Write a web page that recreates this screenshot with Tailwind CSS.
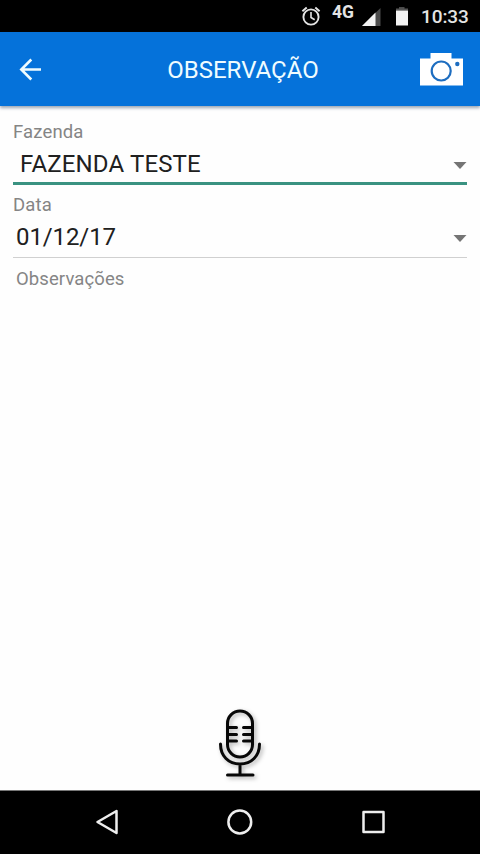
<!DOCTYPE html>
<html lang="pt-BR">
<head>
<meta charset="utf-8">
<title>Observação</title>
<script src="https://cdn.jsdelivr.net/npm/@tailwindcss/browser@4"></script>
</head>
<body class="flex h-[854px] w-[480px] flex-col overflow-hidden bg-[#fefefe] font-['Roboto',sans-serif]">
  <div class="flex h-8 shrink-0 items-center bg-black pl-[300px] text-[#e4e4e4]">
    <svg class="h-8 w-[22px] shrink-0" viewBox="300 0 22 32" fill="none" stroke="#e4e4e4" stroke-width="1.9">
      <circle cx="311" cy="17" r="7.6"/>
      <path d="M311 12v5.5l3.7 2.2" stroke-width="1.6"/>
      <path d="M302.4 11.2l4.3-3.7M319.6 11.2l-4.3-3.7"/>
    </svg>
    <span class="ml-[10px] w-[26px] shrink-0 pb-[8px] text-[17.500px] leading-6 font-bold">4G</span>
    <svg class="ml-[3px] h-8 w-[50px] shrink-0" viewBox="361 0 50 32">
      <path d="M380.500 8v18h-18.500z" fill="#4a4a4a"/>
      <path d="M375.500 12.500v13.500h-13.500z" fill="#f2f2f2"/>
      <path d="M399 7h5.500v2h-5.500z" fill="#4a4a4a"/>
      <path d="M396 8.500h12v2h-12z" fill="#555"/>
      <path d="M396 10.500h12v15h-12z" fill="#f2f2f2"/>
    </svg>
    <span class="ml-[10px] pt-px text-[19px] leading-8 font-medium tracking-[-0.1px] whitespace-nowrap">10:33</span>
  </div>

  <header class="z-10 grid h-[74px] shrink-0 grid-cols-[60px_1fr_60px] items-center bg-[#0572da] text-white shadow-[0_2px_3px_rgba(60,80,110,0.5)]">
    <svg class="h-[74px] w-[60px]" viewBox="0 32 60 74" fill="none" stroke="#effcff" stroke-width="2.600">
      <path d="M41 69.500H21.500M31.300 59.500L21.300 69.500l10 10"/>
    </svg>
    <h1 class="h-[74px] pl-[6px] text-center text-[24px] leading-[76px] font-normal text-[#effcff]">OBSERVAÇÃO</h1>
    <svg class="h-[74px] w-[60px]" viewBox="420 32 60 74">
      <path d="M420 58.500h10.500v-5.500h21v5.500H463v27h-43z" fill="#fff"/>
      <circle cx="441.200" cy="71" r="9.500" fill="none" stroke="#1d6dc0" stroke-width="2.200"/>
      <circle cx="457.300" cy="64" r="2.200" fill="#1d6dc0"/>
    </svg>
  </header>

  <main class="flex grow flex-col px-[13px] pt-[13px]">
    <label class="h-6 text-[18.500px] leading-[26px] tracking-[0.15px] text-[#858585]">Fazenda</label>
    <div class="flex h-[42px] items-center justify-between border-b-[3px] border-[#3a9281] pl-[7px]">
      <span class="pt-[3px] text-[24px] leading-[36px] tracking-[0.15px] text-[#202020]">FAZENDA TESTE</span>
      <svg class="mt-[5px] h-[7px] w-[14px]" viewBox="0 0 14 7"><path d="M.5 0h13L7 7z" fill="#757575"/></svg>
    </div>
    <label class="mt-[7px] h-6 text-[18.500px] leading-[26px] tracking-[0.15px] text-[#858585]">Data</label>
    <div class="flex h-[42px] items-center justify-between border-b border-[#d0d0d0] pl-[3px]">
      <span class="pt-[2px] text-[24px] leading-[39px] tracking-[-0.1px] text-[#202020]">01/12/17</span>
      <svg class="mt-[4px] h-[7px] w-[14px]" viewBox="0 0 14 7"><path d="M.5 0h13L7 7z" fill="#757575"/></svg>
    </div>
    <p class="mt-[8px] pl-[3px] text-[18.500px] leading-[26px] tracking-[0.1px] text-[#858585]">Observações</p>
    <svg class="mx-auto mt-auto h-[90px] w-[60px] drop-shadow-[2px_2px_2px_rgba(0,0,0,0.3)]" viewBox="210 700 60 90" fill="none" stroke="#080808" stroke-width="3" stroke-linecap="round">
      <rect x="227.500" y="711" width="25" height="46" rx="12.500"/>
      <path d="M229 727.500h7.500M229 734.500h7.500M229 741h7.500M243.500 727.500h7.500M243.500 734.500h7.500M243.500 741h7.500M220.500 744C220.500 756 228.500 764 240 764S259.500 756 259.500 744M240 764v11M227.500 775h25.500"/>
    </svg>
  </main>

  <nav class="h-16 shrink-0 border-t border-[#777] bg-black">
    <svg class="h-[63px] w-[480px]" viewBox="0 791 480 63" fill="none" stroke="#eee" stroke-width="2.500" stroke-linejoin="round">
      <path d="M116.500 811v22l-19-11z"/>
      <circle cx="239.800" cy="822" r="11.400"/>
      <rect x="363.500" y="812" width="20" height="20"/>
    </svg>
  </nav>
</body>
</html>
